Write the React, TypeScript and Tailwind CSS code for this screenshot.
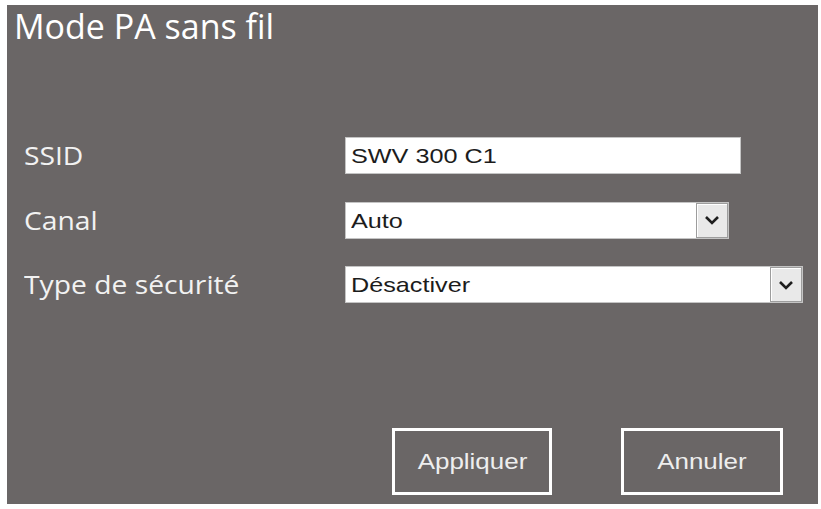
import React from "react";

const arial = { fontFamily: '"Liberation Sans", Arial, sans-serif' };

function Chevron() {
  return (
    <svg width="16" height="10" viewBox="0 0 16 10" fill="none">
      <path d="M2 2 L8 8 L14 2" stroke="#1e1e1e" strokeWidth="2.6" />
    </svg>
  );
}

function Field({ value, width }: { value: string; width: string }) {
  return (
    <div
      className={`${width} h-[37px] bg-white border border-[#c4c4c4] flex items-center pl-[5px] text-[21px] text-[#1c1c1c]`}
      style={arial}
    >
      <span className="inline-block origin-left scale-x-[1.2]">{value}</span>
    </div>
  );
}

function Select({ value, width }: { value: string; width: string }) {
  return (
    <div
      className={`${width} h-[37px] bg-white border border-[#c4c4c4] flex items-stretch text-[21px] text-[#1c1c1c]`}
      style={arial}
    >
      <div className="flex-1 flex items-center pl-[5px]">
        <span className="inline-block origin-left scale-x-[1.2]">{value}</span>
      </div>
      <div className="w-[32px] bg-[#e9e9e9] border border-[#9d9d9d] shadow-[inset_1px_1px_0_#ffffff] flex items-center justify-center">
        <Chevron />
      </div>
    </div>
  );
}

export default function App() {
  const rows = [
    { label: "SSID", el: <Field value="SWV 300 C1" width="w-[396px]" /> },
    { label: "Canal", el: <Select value="Auto" width="w-[384px]" /> },
    { label: "Type de sécurité", el: <Select value="Désactiver" width="w-[458px]" /> },
  ];

  return (
    <div className="w-[821px] h-[509px] bg-white pt-[5px] pl-[7px]">
      <div
        className="w-[811px] h-[499px] bg-[#6a6666] flex flex-col"
        style={{ fontFamily: '"Open Sans", "Noto Sans", sans-serif' }}
      >
        <div className="pl-[7px] text-[34px] leading-[42px] text-white">Mode PA sans fil</div>

        <div className="mt-[90px] flex flex-col gap-[27px]">
          {rows.map((r) => (
            <div key={r.label} className="flex items-center">
              <div className="w-[338px] pl-[17px] text-[25px] text-[#f2f2f2]">
                <span className="inline-block origin-left scale-x-[1.13]">{r.label}</span>
              </div>
              {r.el}
            </div>
          ))}
        </div>

        <div className="mt-auto mb-[9px] flex pl-[385px] gap-[69px]">
          <button className="w-[160px] h-[67px] border-[3px] border-white text-[22px] text-[#eeeeee]" style={arial}>
            <span className="inline-block scale-x-[1.18]">Appliquer</span>
          </button>
          <button className="w-[162px] h-[67px] border-[3px] border-white text-[22px] text-[#eeeeee]" style={arial}>
            <span className="inline-block scale-x-[1.18]">Annuler</span>
          </button>
        </div>
      </div>
    </div>
  );
}
